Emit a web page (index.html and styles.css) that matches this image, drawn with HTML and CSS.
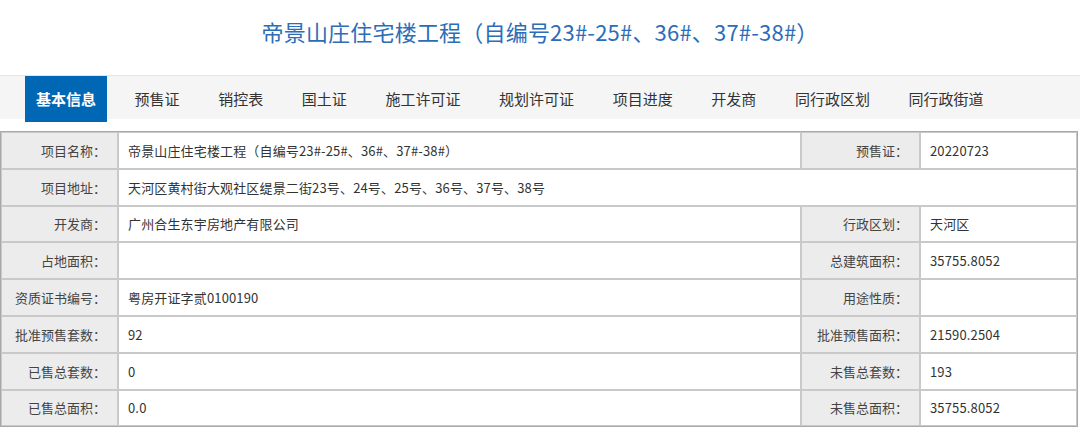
FILE: index.html
```html
<!DOCTYPE html>
<html lang="zh-CN">
<head>
<meta charset="utf-8">
<title>帝景山庄住宅楼工程</title>
<link rel="stylesheet" href="styles.css">
</head>
<body>
<h1 class="title">帝景山庄住宅楼工程（自编号23#-25#、36#、37#-38#）</h1>
<ul class="tabs">
  <li class="tab active">基本信息</li>
  <li class="tab">预售证</li>
  <li class="tab">销控表</li>
  <li class="tab">国土证</li>
  <li class="tab">施工许可证</li>
  <li class="tab">规划许可证</li>
  <li class="tab">项目进度</li>
  <li class="tab">开发商</li>
  <li class="tab">同行政区划</li>
  <li class="tab">同行政街道</li>
</ul>
<table class="info">
  <colgroup>
    <col class="c-label1">
    <col class="c-value1">
    <col class="c-label2">
    <col class="c-value2">
  </colgroup>
  <tbody>
    <tr>
      <td class="lbl">项目名称：</td>
      <td class="val">帝景山庄住宅楼工程（自编号23#-25#、36#、37#-38#）</td>
      <td class="lbl">预售证：</td>
      <td class="val">20220723</td>
    </tr>
    <tr>
      <td class="lbl">项目地址：</td>
      <td class="val" colspan="3">天河区黄村街大观社区缇景二街23号、24号、25号、36号、37号、38号</td>
    </tr>
    <tr>
      <td class="lbl">开发商：</td>
      <td class="val">广州合生东宇房地产有限公司</td>
      <td class="lbl">行政区划：</td>
      <td class="val">天河区</td>
    </tr>
    <tr>
      <td class="lbl">占地面积：</td>
      <td class="val"></td>
      <td class="lbl">总建筑面积：</td>
      <td class="val">35755.8052</td>
    </tr>
    <tr>
      <td class="lbl">资质证书编号：</td>
      <td class="val">粤房开证字贰0100190</td>
      <td class="lbl">用途性质：</td>
      <td class="val"></td>
    </tr>
    <tr>
      <td class="lbl">批准预售套数：</td>
      <td class="val">92</td>
      <td class="lbl">批准预售面积：</td>
      <td class="val">21590.2504</td>
    </tr>
    <tr>
      <td class="lbl">已售总套数：</td>
      <td class="val">0</td>
      <td class="lbl">未售总套数：</td>
      <td class="val">193</td>
    </tr>
    <tr>
      <td class="lbl">已售总面积：</td>
      <td class="val">0.0</td>
      <td class="lbl">未售总面积：</td>
      <td class="val">35755.8052</td>
    </tr>
  </tbody>
</table>
</body>
</html>
```

FILE: styles.css
```css
html, body {
  margin: 0;
  padding: 0;
  background: #ffffff;
}

body {
  font-family: "Noto Sans CJK SC", "Noto Sans", "Liberation Sans", sans-serif;
  color: #333333;
  width: 1080px;
}

.title {
  margin: 0 0 13px 0;
  height: 62px;
  line-height: 62px;
  text-align: center;
  font-size: 22px;
  font-weight: normal;
  color: #2c6db8;
  letter-spacing: 0.2px;
}

.tabs {
  list-style: none;
  margin: 0;
  padding: 0 0 0 25px;
  height: 43px;
  display: flex;
  align-items: flex-start;
  gap: 16.6px;
  background: #f5f5f5;
  border-top: 1px solid #e6e6e6;
}

.tab {
  height: 46px;
  line-height: 46px;
  padding: 0 11px;
  font-size: 15px;
  color: #333333;
  white-space: nowrap;
}

.tab.active {
  background: #0067b5;
  color: #ffffff;
  font-weight: bold;
}

.info {
  margin-top: 12px;
  width: 1078px;
  table-layout: fixed;
  border-collapse: separate;
  border-spacing: 0;
  border: 1px solid #a9a9a9;
  font-size: 13px;
}

.c-label1 { width: 117px; }
.c-value1 { width: 683px; }
.c-label2 { width: 119px; }
.c-value2 { width: 157px; }

.info td {
  height: 36.8px;
  box-sizing: border-box;
  border: 1px solid #c9c9c9;
  padding: 0;
  white-space: nowrap;
  overflow: hidden;
}

.info td.lbl {
  background: #ececec;
  text-align: right;
  padding-right: 11px;
  color: #444444;
}

.info td.val {
  background: #ffffff;
  text-align: left;
  padding-left: 9px;
  color: #333333;
  letter-spacing: 0.15px;
}
```
